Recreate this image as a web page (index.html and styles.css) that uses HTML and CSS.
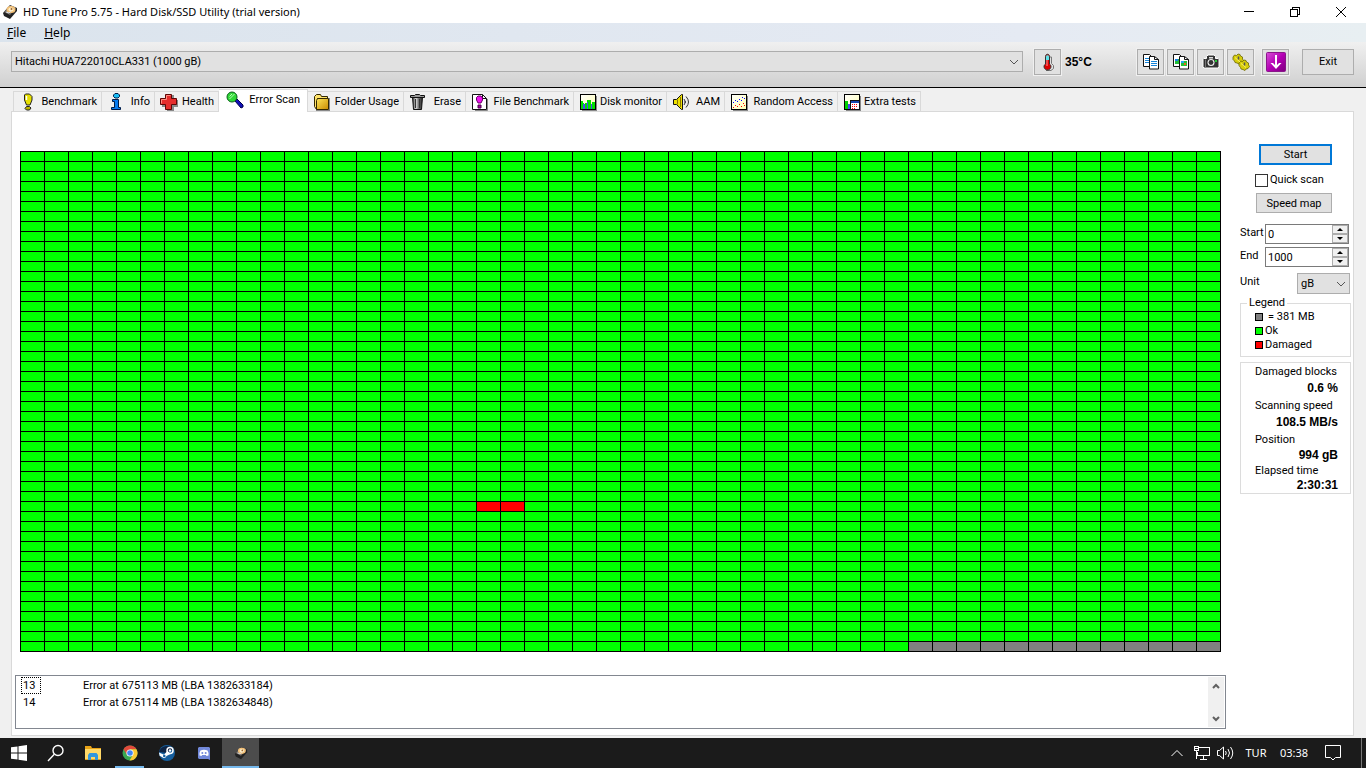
FILE: index.html
```html
<!DOCTYPE html>
<html lang="en">
<head>
<meta charset="utf-8">
<title>HD Tune Pro 5.75 - Hard Disk/SSD Utility (trial version)</title>
<link rel="stylesheet" href="styles.css">
</head>
<body>
<svg class="defs" width="0" height="0" aria-hidden="true">
  <defs>
    <symbol id="drive" viewBox="0 0 16 16">
      <path d="M1 9 8 1l7 3v3l-7 8-6-3z" fill="#222"/>
      <path d="M2 8 8 1.500l6 2.500-6 7z" fill="#77716c"/>
      <ellipse cx="9" cy="5.500" rx="4.500" ry="3.500" fill="#f2c078"/>
      <ellipse cx="9" cy="5.500" rx="2.600" ry="2" fill="#fff0ca"/>
      <circle cx="9.500" cy="5" r="1" fill="#a26b32"/>
      <path d="m4 8 3 1 2-2" stroke="#ddd" fill="none"/>
    </symbol>
    <linearGradient id="gold" x2="1" y2="1"><stop stop-color="#ffe75a"/><stop offset="1" stop-color="#c88a00"/></linearGradient>
    <linearGradient id="can"><stop stop-color="#333"/><stop offset=".35" stop-color="#ddd"/><stop offset=".6" stop-color="#777"/><stop offset="1" stop-color="#222"/></linearGradient>
    <linearGradient id="purple" x2="1" y2="1"><stop stop-color="#d850d8"/><stop offset=".5" stop-color="#b400b4"/><stop offset="1" stop-color="#7d007d"/></linearGradient>
    <linearGradient id="cream" x2="1" y2="1"><stop stop-color="#fff"/><stop offset="1" stop-color="#ffffb0"/></linearGradient>
  </defs>
</svg>

<div class="window">
  <header class="titlebar">
    <svg class="i16" aria-hidden="true"><use href="#drive"/></svg>
    <h1>HD Tune Pro 5.75 - Hard Disk/SSD Utility (trial version)</h1>
    <button class="caption" aria-label="Minimize"><svg width="10" height="10" viewBox="0 0 10 10" shape-rendering="crispEdges"><path d="M0 4h10v1H0z"/></svg></button>
    <button class="caption" aria-label="Restore"><svg width="10" height="10" viewBox="0 0 10 10" fill="none" stroke="#000" shape-rendering="crispEdges"><path d="M.5 2.500h7v7h-7zM2.500 2.500v-2h7v7h-2"/></svg></button>
    <button class="caption" aria-label="Close"><svg width="10" height="10" viewBox="0 0 10 10" stroke="#000"><path d="m0 0 10 10M10 0 0 10"/></svg></button>
  </header>

  <nav class="menubar" aria-label="Menu">
    <button><u>F</u>ile</button>
    <button><u>H</u>elp</button>
  </nav>

  <div class="toolbar">
    <select class="combo drive" aria-label="Drive"><option>Hitachi HUA722010CLA331 (1000 gB)</option></select>
    <button class="tool" aria-label="Temperature">
      <svg class="i18" viewBox="0 0 18 18"><path d="M11 4h1.500v6.500l2 2v3L12 17.500H7" stroke="#777" fill="none"/><path d="M6.500 11V3.500C6.500.5 10.500.5 10.500 3.500V11c3 2 1 6-2 6s-5-4-2-6z" fill="#d00" stroke="#333"/><path d="M7 3.500c0-1.800 3-1.800 3 0V7H7z" fill="#5fe3ea"/><path d="M8 7v6" stroke="#ff9a9a"/></svg>
    </button>
    <output class="temp">35°C</output>
    <div class="tools">
      <button class="tool" aria-label="Copy text">
        <svg class="i16" viewBox="0 0 16 16" stroke="#111" fill="#fff"><path d="M.5.5h6l2 2v10h-8z"/><path d="M2 4.500h5M2 6.500h5M2 8.500h5" stroke="#1684d8"/><path d="M6.500 2.500h5l4 3v9.500h-9z"/><path d="M11.500 2.500v3h4" fill="none"/><path d="M8 7.500h6M8 9.500h6M8 11.500h6" stroke="#1684d8"/></svg>
      </button>
      <button class="tool" aria-label="Copy image">
        <svg class="i16" viewBox="0 0 16 16" stroke="#111" fill="#fff"><path d="M.5.5h6l2 2v10h-8z"/><path d="M2 5h5v5H2z" fill="#22bd35" stroke="none"/><path d="M2 5h3v2H2z" fill="#167ee8" stroke="none"/><path d="M6.500 2.500h5l4 3v9.500h-9z"/><path d="M11.500 2.500v3h4" fill="none"/><path d="M8 7h6v5H8z" fill="#22c337" stroke="none"/><path d="M8 7h3v2H8z" fill="#28a8f0" stroke="none"/><path d="M11 9h2v2h-2z" fill="#e36a23" stroke="none"/></svg>
      </button>
      <button class="tool" aria-label="Save screenshot">
        <svg class="i18" viewBox="0 0 18 18"><path d="M2 5.500h2.500V3.500L6 2h6l1.500 1.500v2H16l1 1V14l-1 1H2l-1-1V6.500z" fill="#333" stroke="#fff"/><path d="M7 4h4v1.500H7z" fill="#ddd"/><circle cx="9" cy="9.500" r="3.500" fill="#eee"/><circle cx="9" cy="9.500" r="2.400" fill="#333"/><path d="M13 7h2v2h-2z" fill="#22c832"/><path d="M3.500 6.500v8" stroke="#777"/></svg>
      </button>
      <button class="tool" aria-label="Options">
        <svg class="i18" viewBox="0 0 18 18"><g fill="#d6cd0b" stroke="#6b6600" stroke-width=".8"><path d="M1 4 2.500 2l2 .5L6 1l2 .500.5 1.500 2 1v2l1 1.500-1.500 2-2 .5L7 11l-2-1-2-.5L2.500 8 1 6.500z"/><path d="m7 10 1.500-2 2 .5L12 7l2 .500.5 1.500 2 1v2l1 1.500-1.500 2-2 .5-1 1.500-2-1-2-.5-.5-1.500L7 12.500z"/></g><path d="M3 4.500 8 9M9 10.500l5 4" stroke="#fff264"/><path d="M6.500 3.500v3M12.500 9.500v3" stroke="#555" stroke-width="1.500"/></svg>
      </button>
    </div>
    <button class="tool minimize" aria-label="Minimize to tray">
      <svg class="i20" viewBox="0 0 20 20"><rect x=".5" y=".5" width="19" height="19" rx="1" fill="url(#purple)" stroke="#8a168a"/><path d="M10 3v11" stroke="#fff" stroke-width="2"/><path d="M4.500 11H7l3 3 3-3h2.500L10 17z" fill="#fff"/></svg>
    </button>
    <button class="push exit">Exit</button>
  </div>

  <div class="tabs" role="tablist">
    <button class="tab w-benchmark" role="tab"><svg class="i18" viewBox="0 0 18 18"><path d="M6.500 1h4L13 3.500V7l-2 5H7.500l-2-5V2z" fill="#e8e000" stroke="#222"/><path d="M7.500 3v4" stroke="#fff" stroke-width="1.500"/><path d="M7.500 13.500h3l1.500 1.500-1.500 2h-3L6 15.500z" fill="#bcb400" stroke="#222"/></svg>Benchmark</button>
    <button class="tab w-info" role="tab"><svg class="i18" viewBox="0 0 18 18"><path d="M8 .5h3l1.500 1.500v1.500L11 5H8L6.500 3.500V2z" fill="#18bdf5" stroke="#001b48"/><path d="M5.500 6.500h6v8h2v2h-9v-2h3v-6h-2z" fill="#087cf0" stroke="#001b48"/></svg>Info</button>
    <button class="tab w-health" role="tab"><svg class="i18" viewBox="0 0 18 18"><path d="M7 2h7v5h4v7h-4v4H7v-4H2V7h5z" fill="#888"/><path d="M5.500 1.500h6v4h5v6h-5v5h-6v-5h-5v-6h5z" fill="#e52d2d" stroke="#5d0505"/><path d="M6.500 6.500v-4h4M1.500 10.500v-4h5" stroke="#ff8c80" fill="none"/></svg>Health</button>
    <button class="tab w-scan selected" role="tab" aria-selected="true"><svg class="i18" viewBox="0 0 18 18"><path d="m9 10 2-2 6 6v2l-2 1z" fill="#1010b8" stroke="#000048"/><circle cx="6" cy="6" r="5" fill="#30d837" stroke="#075f18"/><path d="M3.500 5.500 6 3M3.500 8l5-5" stroke="#b7ffb4"/></svg>Error Scan</button>
    <button class="tab w-folder" role="tab"><svg class="i18" viewBox="0 0 18 18"><path d="M3 17h13V5h1v13H3z" fill="#888"/><path d="M1.500 13.500V3.500l2-2h4l1 2h6v2h-10v11h-1z" fill="#ffe36a" stroke="#332800"/><path d="M4.500 5.500h11v11h-12v-9z" fill="url(#gold)" stroke="#332800"/></svg>Folder Usage</button>
    <button class="tab w-erase" role="tab"><svg class="i18" viewBox="0 0 18 18"><path d="M3.500 4h10l-1 12.500h-8z" fill="url(#can)" stroke="#111"/><path d="M6.500 6v9M10.500 6v9" stroke="#333"/><path d="M1.500 4.500v-2h4l1-1h4l1 1h4v2z" fill="#999" stroke="#111"/></svg>Erase</button>
    <button class="tab w-file" role="tab"><svg class="i18" viewBox="0 0 18 18"><path d="M4 17.500h12.500V6" stroke="#888" fill="none"/><path d="M1.500 1.500h10l4 4v11h-14z" fill="#fff" stroke="#111"/><path d="M11.500 1.500v4h4" fill="none" stroke="#111"/><path d="M7 3h3l1.500 2v2L10 10H7L5.500 7V4.500z" fill="#ee12ee" stroke="#670067"/><path d="M7 12h3v3H7z" fill="#a500a5" stroke="#4b004b"/></svg>File Benchmark</button>
    <button class="tab w-disk" role="tab"><svg class="i18" viewBox="0 0 18 18" shape-rendering="crispEdges"><path d="M3 3h15v15H3z" fill="#888"/><path d="M1.500 1.500h15v15h-15z" fill="url(#cream)" stroke="#000"/><path d="M2 8h2v2h1v6H2zM6 10h2V7h4v9H6zM13 9h3v7h-3z" fill="#00e000"/><path d="M4 11h2v5H4zM8 9h1v7H8zM12 11h1v5h-1z" fill="#4848ed"/></svg>Disk monitor</button>
    <button class="tab w-aam" role="tab"><svg class="i18" viewBox="0 0 18 18"><path d="M1.500 6.500h3l5-5h1v15h-1l-5-5h-3z" fill="#eee000" stroke="#111"/><path d="M5.500 6.500v5M8.500 4v10" stroke="#887800"/><path d="M12 6q3 3 0 6M14 3.500q5 5.500 0 11M13 8v2" fill="none" stroke="#333"/></svg>AAM</button>
    <button class="tab w-random" role="tab"><svg class="i18" viewBox="0 0 18 18" shape-rendering="crispEdges"><path d="M3 3h15v15H3z" fill="#888"/><path d="M1.500 1.500h15v15h-15z" fill="url(#cream)" stroke="#000"/><path d="M3 9h1v1H3zM5 7h1v1H5zM7 8h1v1H7zM9 6h1v1H9zM11 7h1v1h-1zM12 4h1v1h-1zM14 5h1v1h-1z" fill="#00f"/><path d="M3 14h1v1H3zM5 12h1v1H5zM7 13h1v1H7zM9 11h1v1H9zM11 13h1v1h-1zM13 10h1v1h-1zM14 12h1v1h-1z" fill="red"/></svg>Random Access</button>
    <button class="tab w-extra" role="tab"><svg class="i18" viewBox="0 0 18 18" shape-rendering="crispEdges"><path d="M3 3h15v15H3z" fill="#888"/><path d="M1.500 1.500h15v15h-15z" fill="url(#cream)" stroke="#000"/><path d="M2 8h3v8H2z" fill="#00d000"/><path d="M5 11h2v5H5z" fill="#44e"/><path d="M7.500 7.500h9v9h-9z" fill="#fff" stroke="#111"/><path d="M8 8h8v2H8z" fill="#1848b0"/><path d="M9 11h1v1H9zM11 11h1v1h-1zM13 11h1v1h-1zM9 13h1v1H9zM11 13h1v1h-1zM13 13h1v1h-1zM9 15h1v1H9zM11 15h1v1h-1z" fill="red"/></svg>Extra tests</button>
  </div>

  <main class="panel">
    <div class="results">
      <div class="map" id="map" role="img" aria-label="Disk block map"></div>
      <div class="log">
        <table>
          <tr><td><span class="focus">13</span></td><td>Error at 675113 MB (LBA 1382633184)</td></tr>
          <tr><td><span>14</span></td><td>Error at 675114 MB (LBA 1382634848)</td></tr>
        </table>
        <div class="scroll">
          <button aria-label="Scroll up"><svg width="8" height="6" viewBox="0 0 8 6"><path d="m1 5 3-3 3 3"/></svg></button>
          <button aria-label="Scroll down"><svg width="8" height="6" viewBox="0 0 8 6"><path d="m1 1 3 3 3-3"/></svg></button>
        </div>
      </div>
    </div>

    <aside class="side">
      <button class="push start">Start</button>
      <label class="quick"><input type="checkbox">Quick scan</label>
      <button class="push speed">Speed map</button>
      <div class="field"><label for="from">Start</label>
        <div class="spin"><input id="from" type="text" value="0"><div class="arrows"><button aria-label="Increase start"><svg width="6" height="3" viewBox="0 0 6 3"><path d="m0 3 3-3 3 3z"/></svg></button><button aria-label="Decrease start"><svg width="6" height="3" viewBox="0 0 6 3"><path d="m0 0 3 3 3-3z"/></svg></button></div></div>
      </div>
      <div class="field"><label for="to">End</label>
        <div class="spin"><input id="to" type="text" value="1000"><div class="arrows"><button aria-label="Increase end"><svg width="6" height="3" viewBox="0 0 6 3"><path d="m0 3 3-3 3 3z"/></svg></button><button aria-label="Decrease end"><svg width="6" height="3" viewBox="0 0 6 3"><path d="m0 0 3 3 3-3z"/></svg></button></div></div>
      </div>
      <div class="field unit"><label for="unit">Unit</label><select class="combo" id="unit"><option>gB</option></select></div>
      <fieldset class="legend">
        <legend>Legend</legend>
        <div class="key"><i class="swatch size"></i>= 381 MB</div>
        <div class="key"><i class="swatch ok"></i>Ok</div>
        <div class="key"><i class="swatch bad"></i>Damaged</div>
      </fieldset>
      <dl class="stats">
        <dt>Damaged blocks</dt><dd>0.6 %</dd>
        <dt>Scanning speed</dt><dd>108.5 MB/s</dd>
        <dt>Position</dt><dd class="tight">994 gB</dd>
        <dt class="tight">Elapsed time</dt><dd class="tight">2:30:31</dd>
      </dl>
    </aside>
  </main>
</div>

<footer class="taskbar">
  <button aria-label="Start menu"><svg class="i16" viewBox="0 0 16 16" fill="#fff"><path d="M0 2.300 6.500 1.400v6.100H0zM7.500 1.200 16 0v7.500H7.500zM0 8.500h6.500v6.100L0 13.700zM7.500 8.500H16V16l-8.500-1.200z"/></svg></button>
  <button aria-label="Search"><svg class="i18" viewBox="0 0 18 18" fill="none" stroke="#fff" stroke-width="1.400"><circle cx="11" cy="6.500" r="5"/><path d="M7.300 10.200 1 17"/></svg></button>
  <button aria-label="File Explorer"><svg class="i18" viewBox="0 0 18 18"><path d="M1 2h6l1 2h9v12H1z" fill="#e8a317"/><path d="M1 5h16v10H1z" fill="#ffd968"/><path d="M4 16v-5l1.500-2h7l1.500 2v5h-3v-3H7v3z" fill="#3297dd"/></svg></button>
  <button class="running" aria-label="Chrome"><svg class="i16" viewBox="0 0 16 16"><circle cx="8" cy="8" r="7.500" fill="#39a852"/><path d="M1.500 4.300A7.500 7.500 0 0 1 14.500 4.300H8L5 9.800z" fill="#e24a3b"/><path d="M14.500 4.300A7.500 7.500 0 0 1 7.500 15.500L11.200 9.500 8 4.300z" fill="#fcc934"/><circle cx="8" cy="8" r="3.600" fill="#fff"/><circle cx="8" cy="8" r="2.800" fill="#4285f4"/></svg></button>
  <button aria-label="Steam"><svg class="i16" viewBox="0 0 16 16"><circle cx="8" cy="8" r="8" fill="#155f9f"/><path d="M0 7a8 8 0 0 1 14-3L8 8z" fill="#0d2344"/><circle cx="11" cy="5.500" r="3" fill="none" stroke="#fff" stroke-width="1.500"/><circle cx="11" cy="5.500" r="1.200" fill="#fff"/><path d="M0 7.500 5 9.700l3.500-4 3 3.200-4 2.200A2.500 2.500 0 0 1 3 12L.6 10.800z" fill="#fff"/><circle cx="5.300" cy="11" r="1.300" fill="#155f9f"/></svg></button>
  <button aria-label="Discord"><svg class="i16" viewBox="0 0 16 16"><path d="M3 2h10l1 1v12l-2-1H3l-1-1V3z" fill="#7289da"/><path d="M4.500 5.500Q8 4 11.500 5.500q1.500 2.500 1 5l-2 .5-.7-1H6.200l-.7 1-2-.5q-.5-2.500 1-5z" fill="#fff"/><circle cx="6.300" cy="8" r="1" fill="#7289da"/><circle cx="9.700" cy="8" r="1" fill="#7289da"/></svg></button>
  <button class="active" aria-label="HD Tune Pro"><svg class="i14" aria-hidden="true"><use href="#drive"/></svg></button>
  <div class="tray">
    <button aria-label="Show hidden icons"><svg width="12" height="8" viewBox="0 0 12 8" fill="none" stroke="#fff"><path d="m.5 7 5.500-5.500L11.500 7"/></svg></button>
    <button class="network" aria-label="Network"><svg width="16" height="14" viewBox="0 0 16 14" fill="none" stroke="#fff" shape-rendering="crispEdges"><path d="M5 1.500h10.500v8H3.500V6M.5.500h4v4h-4zM2.500 5v8M9.500 10v3M6 13.500h7M1 2.500h3"/></svg></button>
    <button class="volume" aria-label="Volume"><svg width="17" height="14" viewBox="0 0 17 14" fill="none" stroke="#fff"><path d="M.5 4.500h2l4-3.500v12l-4-3.500h-2zM8.500 5q1.500 2 0 4M11 3q3 4 0 8M13.500 1q4.500 6 0 12"/></svg></button>
    <button class="lang">TUR</button>
    <time>03:38</time>
    <button class="notify" aria-label="Notifications"><svg width="16" height="16" viewBox="0 0 16 16" fill="none" stroke="#fff"><path d="M.5.500h15v12h-5L8 15l-2.500-2.500h-5z"/></svg></button>
    <span class="peek"></span>
  </div>
</footer>
<script src="map.js"></script>
</body>
</html>
```
FILE: styles.css
```css
* { box-sizing: border-box; }
body {
  margin: 0;
  min-height: 100vh;
  display: flex;
  flex-direction: column;
  background: #f0f0f0;
  color: #000;
  font: 11px/14px Roboto, "Liberation Sans", sans-serif;
}
button, input, select { margin: 0; padding: 0; font: inherit; color: inherit; border-radius: 0; }
button { border: 0; background: none; display: flex; align-items: center; justify-content: center; }
svg { flex: none; display: block; }
.defs { position: absolute; }
.i14 { width: 14px; height: 14px; }
.i16 { width: 16px; height: 16px; }
.i18 { width: 18px; height: 18px; }
.i20 { width: 20px; height: 20px; }

.window { flex: 1; display: flex; flex-direction: column; }
.titlebar {
  height: 23px;
  display: flex;
  align-items: center;
  padding: 0 2px;
  background: #fff;
  font-family: "Noto Sans", "Open Sans", sans-serif;
}
.titlebar h1 { flex: 1; margin: 0 0 0 5px; font-size: 11px; font-weight: 400; }
.caption { width: 46px; height: 22px; }

.menubar {
  height: 19px;
  display: flex;
  gap: 18px;
  padding-left: 7px;
  background: linear-gradient(90deg, #dbe4ed, #e5eaf3 75%, #e8eff2);
  font: 12px/14px "Noto Sans", "Open Sans", sans-serif;
}

.toolbar {
  height: 46px;
  display: flex;
  align-items: center;
  padding: 0 12px 6px 11px;
  background: linear-gradient(#f0f0f0, #d0d0d0);
  border-bottom: 1px solid #000;
}
.combo {
  appearance: none;
  height: 21px;
  border: 1px solid #adadad;
  background: #e1e1e1 url("data:image/svg+xml,%3Csvg xmlns='http://www.w3.org/2000/svg' width='10' height='6' fill='none' stroke='%23555'%3E%3Cpath d='m1 1 4 4 4-4'/%3E%3C/svg%3E") no-repeat right 3px center;
  padding: 1px 0 0 3px;
}
.drive { flex: 1; min-width: 0; margin-right: 11px; }
.tool, .push { border: 1px solid #adadad; background: #e1e1e1; }
.push { padding-top: 1px; }
.tool { width: 27px; height: 26px; box-shadow: 0 0 0 1px #f0f0f0; }
.temp { width: 72px; margin-left: 4px; padding-top: 1px; font: bold 12px/14px "Liberation Sans", sans-serif; }
.tools { display: flex; gap: 3px; }
.minimize { margin-left: 8px; }
.exit { width: 52px; height: 26px; margin-left: 13px; }

.tabs { height: 23px; display: flex; align-items: flex-end; padding-left: 13px; }
.tab {
  height: 20px;
  justify-content: space-between;
  padding: 1px 4px 0 5px;
  border: 1px solid #d9d9d9;
  border-width: 1px 1px 0 0;
  white-space: nowrap;
}
.tab:first-child { border-left-width: 1px; }
.selected { height: 23px; padding: 0 7px 3px 7px; background: #fff; margin-bottom: -1px; z-index: 1; }
.w-benchmark { width: 89px; }
.w-info { width: 53px; }
.w-health { width: 64px; }
.w-scan { width: 89px; }
.w-folder { width: 96px; }
.w-erase { width: 62px; }
.w-file { width: 108px; }
.w-disk { width: 93px; }
.w-aam { width: 58px; }
.w-random { width: 113px; }
.w-extra { width: 83px; }

.panel {
  flex: 1;
  display: flex;
  gap: 14px;
  margin: 0 12px 2px 11px;
  padding: 0 2px 6px 3px;
  background: #fff;
  border: 1px solid #d9d9d9;
}
.results { flex: 1; display: flex; flex-direction: column; padding-top: 39px; }
.map {
  display: grid;
  grid-template-columns: repeat(50, 1fr);
  grid-auto-rows: 10px;
  margin: 0 5px 23px;
  border: 1px solid #000;
  border-width: 0 1px 1px 0;
}
.cell { border: 1px solid #000; border-width: 1px 0 0 1px; background: #0f0; }
.cell.damaged { background: #f00; }
.cell.pending { background: #808080; }
.log { flex: 1; display: flex; justify-content: space-between; border: 1px solid #828790; padding: 1px; }
.log table { border-spacing: 0; align-self: flex-start; }
.log td { height: 17px; padding: 1px 0 0; }
.log td:first-child { width: 66px; padding: 0 0 0 4px; }
.log span { display: block; width: 20px; height: 17px; padding: 1px 0 0 1px; border: 1px solid transparent; }
.log .focus { border: 1px dotted #000; }
.scroll { width: 16px; background: #f0f0f0; display: flex; flex-direction: column; justify-content: space-between; }
.scroll button { height: 17px; }
.scroll path { fill: none; stroke: #606060; stroke-width: 2; }

.side { width: 111px; display: flex; flex-direction: column; padding-top: 32px; }
.start { width: 73px; height: 21px; margin-left: 19px; border: 2px solid #0078d7; }
.quick { display: flex; align-items: center; gap: 2px; margin: 8px 0 6px 15px; }
.quick input { appearance: none; width: 13px; height: 13px; border: 1px solid #333; background: #fff; }
.speed { width: 76px; height: 20px; margin: 0 0 11px 16px; }
.field { display: flex; justify-content: space-between; margin-bottom: 3px; padding-right: 2px; }
.field label { padding-top: 2px; }
.spin { display: flex; width: 84px; height: 20px; border: 1px solid #7a7a7a; }
.spin input { flex: 1; min-width: 0; border: 0; padding: 1px 2px 0; background: #fff; }
.arrows { width: 16px; display: flex; flex-direction: column; background: #f0f0f0; }
.arrows button { flex: 1; border: 1px solid #adadad; }
.unit { margin: 3px 0 0; padding-right: 1px; }
.unit .combo { width: 53px; }
.legend { margin: 2px 0 5px; padding: 0 0 4px 14px; border: 1px solid #dcdcdc; }
.legend legend { margin-left: -8px; padding: 0 2px; }
.key { display: flex; align-items: center; gap: 2px; }
.swatch { width: 8px; height: 8px; border: 1px solid #000; }
.size { background: #808080; margin-right: 3px; }
.ok { background: #0f0; }
.bad { background: #f00; }
.stats { margin: 0; padding: 0 12px 0 14px; border: 1px solid #dcdcdc; line-height: 17px; }
.stats dd { margin: 0; text-align: right; font: bold 12px/17px "Liberation Sans", sans-serif; }
.stats .tight { line-height: 15px; }

.taskbar { height: 30px; display: flex; background: #1b1b1b; color: #fff; font: 11px/14px "Noto Sans", "Open Sans", sans-serif; }
.taskbar > button { width: 37px; }
.taskbar .active { background: #4c4c4c; border-bottom: 2px solid #76b9ed; padding-top: 2px; }
.taskbar .running { width: 29px; margin: 0 4px; border-bottom: 2px solid #76b9ed; padding-top: 2px; }
.tray { flex: 1; display: flex; align-items: center; justify-content: flex-end; }
.network { margin-left: 11px; }
.volume { margin-left: 7px; }
.lang { width: 22px; margin-left: 11px; }
.tray time { width: 30px; margin-left: 12px; text-align: center; }
.notify { margin: 0 20px 0 16px; }
.peek { align-self: stretch; border-left: 1px solid #777; width: 5px; }
```
FILE: map.js
```javascript
const COLUMNS = 50;
const ROWS = 50;
const damaged = new Set([35 * COLUMNS + 19, 35 * COLUMNS + 20]);
const firstPending = 49 * COLUMNS + 37;

const map = document.getElementById("map");
for (let i = 0; i < COLUMNS * ROWS; i++) {
  const cell = document.createElement("div");
  cell.className = "cell";
  if (damaged.has(i)) cell.classList.add("damaged");
  if (i >= firstPending) cell.classList.add("pending");
  map.append(cell);
}
```
